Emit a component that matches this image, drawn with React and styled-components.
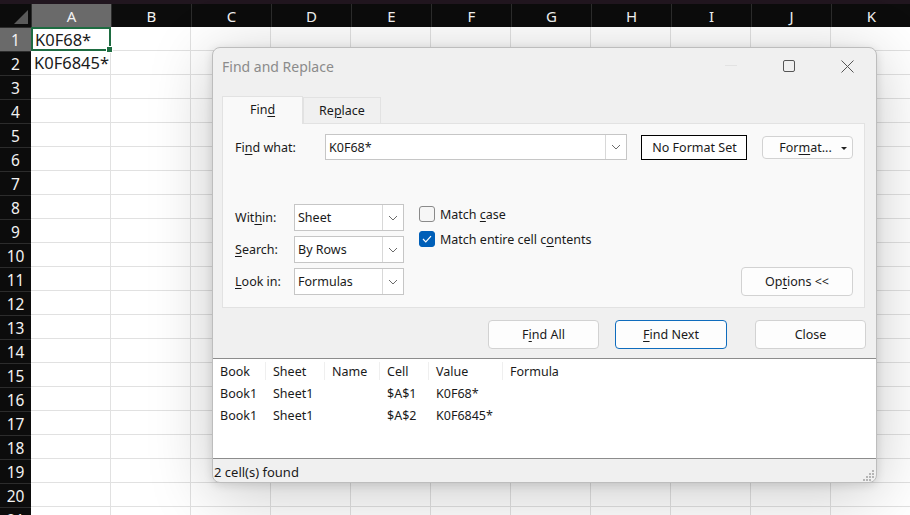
import React from "react";
import styled, { createGlobalStyle } from "styled-components";

const Global = createGlobalStyle`
  html, body { margin: 0; padding: 0; background: #fff; overflow: hidden; }
  body { width: 910px; height: 515px; }
  #root { width: 910px; height: 515px; }
`;

const UI = `"Noto Sans", "Open Sans", sans-serif`;

const Page = styled.div`
  position: relative;
  width: 910px;
  height: 515px;
  overflow: hidden;
  background: #fff;
`;

const TopStrip = styled.div`
  height: 4px;
  background: #21161f;
`;

const Sheet = styled.div`
  display: grid;
  grid-template-columns: 31px repeat(11, 80px);
  grid-template-rows: 23px;
  grid-auto-rows: 24px;
`;

const Corner = styled.div`
  background: #0c0c0c;
  position: relative;
  &::after {
    content: "";
    position: absolute;
    right: 3px;
    bottom: 3px;
    width: 0;
    height: 0;
    border-left: 14px solid transparent;
    border-bottom: 14px solid #5a5a5a;
  }
`;

const ColHead = styled.div`
  background: ${(p) => (p.$sel ? "#6a6a6a" : "#0c0c0c")};
  color: #f2f2f2;
  border-left: 1px solid #2c2c2c;
  font-family: "Noto Sans", sans-serif;
  font-size: 15px;
  display: flex;
  align-items: center;
  justify-content: center;
  box-sizing: border-box;
`;

const RowHead = styled.div`
  background: ${(p) => (p.$sel ? "#6a6a6a" : "#0c0c0c")};
  color: #f2f2f2;
  border-top: 1px solid #2c2c2c;
  font-family: "Noto Sans", sans-serif;
  font-size: 15.5px;
  display: flex;
  align-items: center;
  justify-content: center;
  box-sizing: border-box;
`;

const Cell = styled.div`
  border-right: 1px solid #e1e1e1;
  border-bottom: 1px solid #e1e1e1;
  box-sizing: border-box;
  font-family: "Noto Sans", sans-serif;
  font-size: 16.5px;
  color: #1a1a1a;
  padding-left: 3px;
  display: flex;
  align-items: center;
  white-space: nowrap;
  position: relative;
  ${(p) =>
    p.$active &&
    `border: 2px solid #1e6c41; padding-left: 2px;
     &::after { content: ""; position: absolute; right: -4px; bottom: -4px; width: 5px; height: 5px; background: #1e6c41; border: 1px solid #fff; z-index: 2; }`}
`;

const Dialog = styled.div`
  position: absolute;
  left: 212px;
  top: 47px;
  width: 665px;
  height: 436px;
  box-sizing: border-box;
  background: #f0f0f0;
  border: 1px solid #bdbdbd;
  border-radius: 8px;
  box-shadow: 0 10px 64px rgba(0, 0, 0, 0.22), 0 2px 10px rgba(0, 0, 0, 0.12);
  display: flex;
  flex-direction: column;
  font-family: ${UI};
  font-size: 12.5px;
  color: #1a1a1a;
  overflow: hidden;
`;

const TitleBar = styled.div`
  height: 41px;
  box-sizing: border-box;
  display: flex;
  align-items: center;
  padding: 0 0 5px 9px;
  flex-shrink: 0;
`;

const Title = styled.div`
  flex: 1;
  color: #8b8b8b;
  font-size: 14px;
`;

const WinBtn = styled.div`
  width: 58px;
  height: 36px;
  display: flex;
  align-items: center;
  justify-content: center;
`;

const TabsRow = styled.div`
  display: flex;
  align-items: flex-end;
  margin: 6px 0 0 9px;
  height: 28px;
  flex-shrink: 0;
`;

const Tab = styled.div`
  box-sizing: border-box;
  height: ${(p) => (p.$active ? "28px" : "26px")};
  width: ${(p) => p.$w}px;
  display: flex;
  align-items: center;
  justify-content: center;
  background: ${(p) => (p.$active ? "#f9f9f9" : "#f0f0f0")};
  border: 1px solid #e2e2e2;
  border-bottom: none;
  margin-bottom: ${(p) => (p.$active ? "-1px" : "0")};
  position: relative;
  z-index: ${(p) => (p.$active ? 2 : 1)};
  padding-bottom: ${(p) => (p.$active ? "2px" : "0")};
`;

const Panel = styled.div`
  box-sizing: border-box;
  margin: 0 11px 0 9px;
  height: 185px;
  background: #f9f9f9;
  border: 1px solid #e2e2e2;
  padding: 11px 11px 0 12px;
  display: flex;
  flex-direction: column;
  flex-shrink: 0;
`;

const FindRow = styled.div`
  display: flex;
  align-items: center;
  height: 26px;
  margin-top: -1px;
`;

const Label = styled.div`
  width: ${(p) => p.$w}px;
  flex-shrink: 0;
`;

const Combo = styled.div`
  box-sizing: border-box;
  width: ${(p) => p.$w}px;
  height: ${(p) => p.$h || 26}px;
  background: #fff;
  border: 1px solid #c6c6c6;
  display: flex;
  align-items: stretch;
  flex-shrink: 0;
`;

const ComboText = styled.div`
  flex: 1;
  display: flex;
  align-items: center;
  padding-left: 3px;
`;

const ComboArrow = styled.div`
  width: 20px;
  border-left: 1px solid #d8d8d8;
  display: flex;
  align-items: center;
  justify-content: center;
`;

const FormatBox = styled.div`
  box-sizing: border-box;
  margin-left: 14px;
  width: 106px;
  height: 25px;
  border: 1px solid #000;
  background: #fff;
  display: flex;
  align-items: center;
  justify-content: center;
  padding-left: 1px;
`;

const Button = styled.div`
  box-sizing: border-box;
  width: ${(p) => p.$w}px;
  height: ${(p) => p.$h}px;
  background: #fdfdfd;
  border: 1px solid ${(p) => (p.$primary ? "#0f6cbd" : "#d2d2d2")};
  border-radius: 4px;
  display: flex;
  align-items: center;
  justify-content: center;
  flex-shrink: 0;
  position: relative;
`;

const Caret = styled.span`
  position: absolute;
  right: 5px;
  top: 10px;
  width: 0;
  height: 0;
  border-left: 3px solid transparent;
  border-right: 3px solid transparent;
  border-top: 3px solid #222;
`;

const OptionsArea = styled.div`
  display: flex;
  margin-top: 44px;
`;

const SelectCol = styled.div`
  display: flex;
  flex-direction: column;
  gap: 5px;
`;

const SelectRow = styled.div`
  display: flex;
  align-items: center;
`;

const CheckCol = styled.div`
  display: flex;
  flex-direction: column;
  gap: 9px;
  margin-left: 15px;
  padding-top: 2px;
`;

const CheckRow = styled.div`
  display: flex;
  align-items: center;
  gap: 5px;
  height: 16px;
`;

const Box = styled.div`
  box-sizing: border-box;
  width: 16px;
  height: 16px;
  border-radius: 3px;
  border: 1px solid ${(p) => (p.$on ? "#005fb8" : "#8a8a8a")};
  background: ${(p) => (p.$on ? "#005fb8" : "#f6f6f6")};
  display: flex;
  align-items: center;
  justify-content: center;
`;

const Spacer = styled.div`
  flex: 1;
`;

const OptionsBtnWrap = styled.div`
  display: flex;
  align-items: flex-end;
  margin-bottom: -1px;
`;

const ButtonRow = styled.div`
  display: flex;
  justify-content: flex-end;
  margin: 12px 10px 0 0;
  height: 29px;
  flex-shrink: 0;
`;

const List = styled.div`
  box-sizing: border-box;
  margin-top: 9px;
  height: 101px;
  background: #fff;
  border: 1px solid #8c8c8c;
  margin-left: -1px;
  margin-right: -1px;
  padding: 1px 0 0 0;
  flex-shrink: 0;
`;

const Grid = styled.div`
  display: grid;
  grid-template-columns: 53px 59px 55px 49px 74px 1fr;
  grid-auto-rows: 22px;
`;

const HeadCell = styled.div`
  display: flex;
  align-items: center;
  padding-left: 7px;
  border-right: ${(p) => (p.$last ? "none" : "1px solid #efefef")};
  margin: 2px 0;
`;

const DataCell = styled.div`
  display: flex;
  align-items: center;
  padding-left: 7px;
`;

const Status = styled.div`
  flex: 1;
  display: flex;
  align-items: center;
  padding-left: 1px;
  padding-top: 2px;
  position: relative;
  font-size: 13px;
`;

const Grip = styled.svg`
  position: absolute;
  right: 1px;
  bottom: 1px;
`;

const U = styled.span`
  text-decoration: underline;
  text-underline-offset: 2px;
`;

const Chevron = () => (
  <svg width="10" height="6" viewBox="0 0 10 6">
    <path d="M1 1 L5 5 L9 1" fill="none" stroke="#6b6b6b" strokeWidth="1" />
  </svg>
);

const colLetters = ["A", "B", "C", "D", "E", "F", "G", "H", "I", "J", "K"];

export default function App() {
  const rows = Array.from({ length: 21 }, (_, i) => i + 1);
  return (
    <Page>
      <Global />
      <TopStrip />
      <Sheet>
        <Corner />
        {colLetters.map((c) => (
          <ColHead key={c} $sel={c === "A"}>
            {c}
          </ColHead>
        ))}
        {rows.map((r) => (
          <React.Fragment key={r}>
            <RowHead $sel={r === 1}>{r}</RowHead>
            {colLetters.map((c) => (
              <Cell key={c} $active={r === 1 && c === "A"}>
                {c === "A" && r === 1 ? "K0F68*" : c === "A" && r === 2 ? "K0F6845*" : ""}
              </Cell>
            ))}
          </React.Fragment>
        ))}
      </Sheet>

      <Dialog>
        <TitleBar>
          <Title>Find and Replace</Title>
          <WinBtn>
            <svg width="12" height="2" viewBox="0 0 12 2">
              <rect width="12" height="1" fill="#e2e2e2" />
            </svg>
          </WinBtn>
          <WinBtn>
            <svg width="12" height="12" viewBox="0 0 12 12">
              <rect x="0.5" y="0.5" width="11" height="11" rx="1.5" fill="none" stroke="#555" />
            </svg>
          </WinBtn>
          <WinBtn>
            <svg width="13" height="13" viewBox="0 0 13 13">
              <path d="M0.5 0.5 L12.5 12.5 M12.5 0.5 L0.5 12.5" stroke="#555" strokeWidth="1" />
            </svg>
          </WinBtn>
        </TitleBar>

        <TabsRow>
          <Tab $active $w={81}>
            <span>
              Fin<U>d</U>
            </span>
          </Tab>
          <Tab $w={78}>
            <span>
              Re<U>p</U>lace
            </span>
          </Tab>
        </TabsRow>

        <Panel>
          <FindRow>
            <Label $w={90}>
              Fi<U>n</U>d what:
            </Label>
            <Combo $w={302}>
              <ComboText>K0F68*</ComboText>
              <ComboArrow>
                <Chevron />
              </ComboArrow>
            </Combo>
            <FormatBox>No Format Set</FormatBox>
            <Spacer />
            <Button $w={91} $h={23}>
              <span style={{ marginLeft: -4 }}>
                For<U>m</U>at...
              </span>
              <Caret />
            </Button>
          </FindRow>

          <OptionsArea>
            <SelectCol>
              <SelectRow>
                <Label $w={59}>
                  Wit<U>h</U>in:
                </Label>
                <Combo $w={110} $h={27}>
                  <ComboText>Sheet</ComboText>
                  <ComboArrow>
                    <Chevron />
                  </ComboArrow>
                </Combo>
              </SelectRow>
              <SelectRow>
                <Label $w={59}>
                  <U>S</U>earch:
                </Label>
                <Combo $w={110} $h={27}>
                  <ComboText>By Rows</ComboText>
                  <ComboArrow>
                    <Chevron />
                  </ComboArrow>
                </Combo>
              </SelectRow>
              <SelectRow>
                <Label $w={59}>
                  <U>L</U>ook in:
                </Label>
                <Combo $w={110} $h={27}>
                  <ComboText>Formulas</ComboText>
                  <ComboArrow>
                    <Chevron />
                  </ComboArrow>
                </Combo>
              </SelectRow>
            </SelectCol>
            <CheckCol>
              <CheckRow>
                <Box />
                <span>
                  Match <U>c</U>ase
                </span>
              </CheckRow>
              <CheckRow>
                <Box $on>
                  <svg width="10" height="8" viewBox="0 0 10 8">
                    <path d="M1 4 L3.8 6.8 L9 1.2" fill="none" stroke="#fff" strokeWidth="1.2" />
                  </svg>
                </Box>
                <span>
                  Match entire cell c<U>o</U>ntents
                </span>
              </CheckRow>
            </CheckCol>
            <Spacer />
            <OptionsBtnWrap>
              <Button $w={112} $h={29}>
                <span>
                  Op<U>t</U>ions &lt;&lt;
                </span>
              </Button>
            </OptionsBtnWrap>
          </OptionsArea>
        </Panel>

        <ButtonRow>
          <Button $w={111} $h={29}>
            <span>
              F<U>i</U>nd All
            </span>
          </Button>
          <Button $w={112} $h={29} $primary style={{ marginLeft: 16 }}>
            <span>
              <U>F</U>ind Next
            </span>
          </Button>
          <Button $w={111} $h={29} style={{ marginLeft: 28 }}>
            Close
          </Button>
        </ButtonRow>

        <List>
          <Grid>
            <HeadCell>Book</HeadCell>
            <HeadCell>Sheet</HeadCell>
            <HeadCell>Name</HeadCell>
            <HeadCell>Cell</HeadCell>
            <HeadCell>Value</HeadCell>
            <HeadCell $last>Formula</HeadCell>

            <DataCell>Book1</DataCell>
            <DataCell>Sheet1</DataCell>
            <DataCell />
            <DataCell>$A$1</DataCell>
            <DataCell>K0F68*</DataCell>
            <DataCell />

            <DataCell>Book1</DataCell>
            <DataCell>Sheet1</DataCell>
            <DataCell />
            <DataCell>$A$2</DataCell>
            <DataCell>K0F6845*</DataCell>
            <DataCell />
          </Grid>
        </List>

        <Status>
          2 cell(s) found
          <Grip width="12" height="12" viewBox="0 0 12 12">
            <g fill="#b5b5b5">
              <rect x="9" y="1" width="2" height="2" />
              <rect x="6" y="4" width="2" height="2" />
              <rect x="9" y="4" width="2" height="2" />
              <rect x="3" y="7" width="2" height="2" />
              <rect x="6" y="7" width="2" height="2" />
              <rect x="9" y="7" width="2" height="2" />
              <rect x="0" y="10" width="2" height="2" />
              <rect x="3" y="10" width="2" height="2" />
              <rect x="6" y="10" width="2" height="2" />
            </g>
          </Grip>
        </Status>
      </Dialog>
    </Page>
  );
}
